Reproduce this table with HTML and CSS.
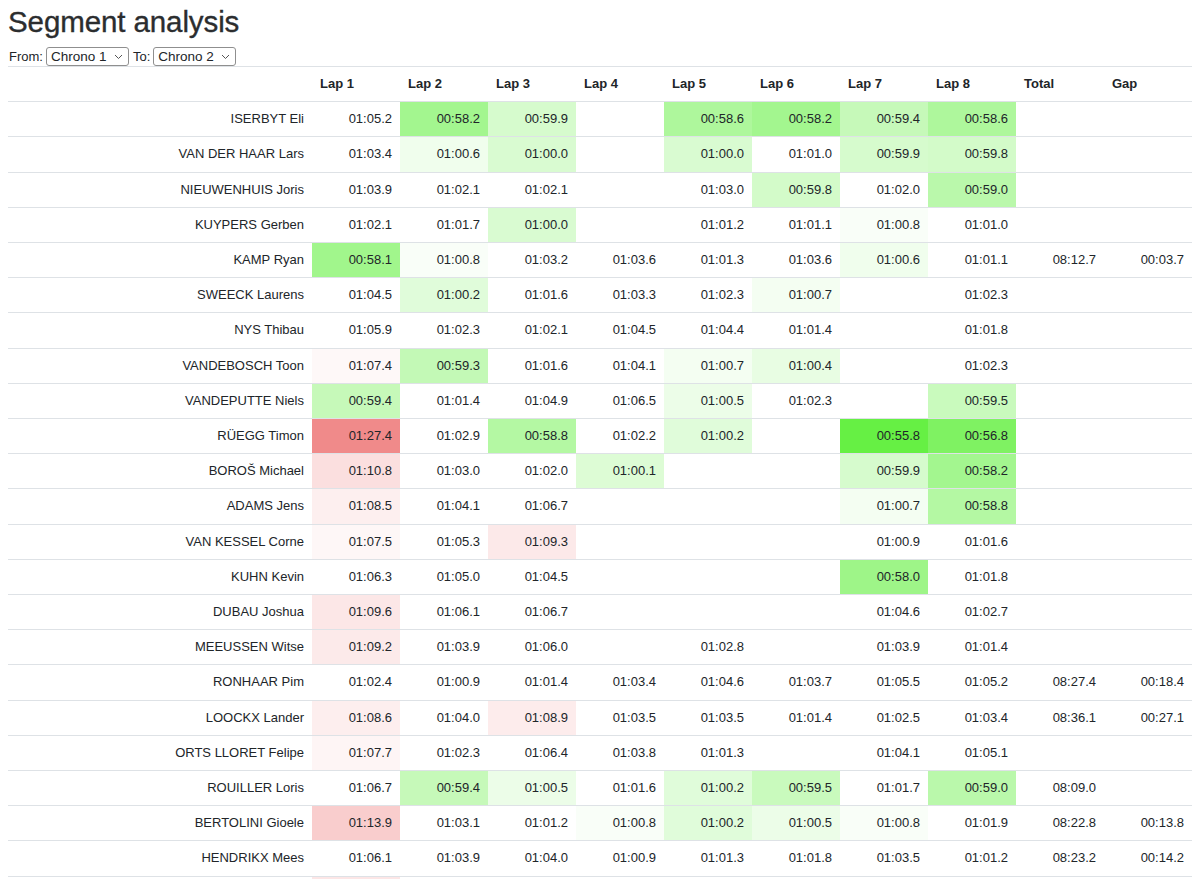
FILE: index.html
```html
<!DOCTYPE html>
<html lang="en">
<head>
<meta charset="utf-8">
<title>Segment analysis</title>
<link rel="stylesheet" href="styles.css">
</head>
<body>
<h1 class="title">Segment analysis</h1>
<div class="controls">
  <label class="ctl-label">From:</label>
  <span class="select-wrap">
    <select class="chrono-select"><option>Chrono 1</option><option>Chrono 2</option></select>
    <svg class="chev" width="9" height="6" viewBox="0 0 9 6"><polyline points="1,1 4.5,4.5 8,1" fill="none" stroke="#555" stroke-width="1"/></svg>
  </span>
  <label class="ctl-label">To:</label>
  <span class="select-wrap">
    <select class="chrono-select"><option>Chrono 2</option><option>Chrono 1</option></select>
    <svg class="chev" width="9" height="6" viewBox="0 0 9 6"><polyline points="1,1 4.5,4.5 8,1" fill="none" stroke="#555" stroke-width="1"/></svg>
  </span>
</div>
<table class="seg-table">
  <colgroup>
    <col class="col-name">
    <col><col><col><col><col><col><col><col><col><col>
  </colgroup>
  <thead>
    <tr><th></th><th>Lap 1</th><th>Lap 2</th><th>Lap 3</th><th>Lap 4</th><th>Lap 5</th><th>Lap 6</th><th>Lap 7</th><th>Lap 8</th><th>Total</th><th>Gap</th></tr>
  </thead>
  <tbody>
    <tr><td>ISERBYT Eli</td><td class="t">01:05.2</td><td class="t">00:58.2</td><td class="t">00:59.9</td><td class="t"></td><td class="t">00:58.6</td><td class="t">00:58.2</td><td class="t">00:59.4</td><td class="t">00:58.6</td><td></td><td></td></tr>
    <tr><td>VAN DER HAAR Lars</td><td class="t">01:03.4</td><td class="t">01:00.6</td><td class="t">01:00.0</td><td class="t"></td><td class="t">01:00.0</td><td class="t">01:01.0</td><td class="t">00:59.9</td><td class="t">00:59.8</td><td></td><td></td></tr>
    <tr><td>NIEUWENHUIS Joris</td><td class="t">01:03.9</td><td class="t">01:02.1</td><td class="t">01:02.1</td><td class="t"></td><td class="t">01:03.0</td><td class="t">00:59.8</td><td class="t">01:02.0</td><td class="t">00:59.0</td><td></td><td></td></tr>
    <tr><td>KUYPERS Gerben</td><td class="t">01:02.1</td><td class="t">01:01.7</td><td class="t">01:00.0</td><td class="t"></td><td class="t">01:01.2</td><td class="t">01:01.1</td><td class="t">01:00.8</td><td class="t">01:01.0</td><td></td><td></td></tr>
    <tr><td>KAMP Ryan</td><td class="t">00:58.1</td><td class="t">01:00.8</td><td class="t">01:03.2</td><td class="t">01:03.6</td><td class="t">01:01.3</td><td class="t">01:03.6</td><td class="t">01:00.6</td><td class="t">01:01.1</td><td>08:12.7</td><td>00:03.7</td></tr>
    <tr><td>SWEECK Laurens</td><td class="t">01:04.5</td><td class="t">01:00.2</td><td class="t">01:01.6</td><td class="t">01:03.3</td><td class="t">01:02.3</td><td class="t">01:00.7</td><td class="t"></td><td class="t">01:02.3</td><td></td><td></td></tr>
    <tr><td>NYS Thibau</td><td class="t">01:05.9</td><td class="t">01:02.3</td><td class="t">01:02.1</td><td class="t">01:04.5</td><td class="t">01:04.4</td><td class="t">01:01.4</td><td class="t"></td><td class="t">01:01.8</td><td></td><td></td></tr>
    <tr><td>VANDEBOSCH Toon</td><td class="t">01:07.4</td><td class="t">00:59.3</td><td class="t">01:01.6</td><td class="t">01:04.1</td><td class="t">01:00.7</td><td class="t">01:00.4</td><td class="t"></td><td class="t">01:02.3</td><td></td><td></td></tr>
    <tr><td>VANDEPUTTE Niels</td><td class="t">00:59.4</td><td class="t">01:01.4</td><td class="t">01:04.9</td><td class="t">01:06.5</td><td class="t">01:00.5</td><td class="t">01:02.3</td><td class="t"></td><td class="t">00:59.5</td><td></td><td></td></tr>
    <tr><td>RÜEGG Timon</td><td class="t">01:27.4</td><td class="t">01:02.9</td><td class="t">00:58.8</td><td class="t">01:02.2</td><td class="t">01:00.2</td><td class="t"></td><td class="t">00:55.8</td><td class="t">00:56.8</td><td></td><td></td></tr>
    <tr><td>BOROŠ Michael</td><td class="t">01:10.8</td><td class="t">01:03.0</td><td class="t">01:02.0</td><td class="t">01:00.1</td><td class="t"></td><td class="t"></td><td class="t">00:59.9</td><td class="t">00:58.2</td><td></td><td></td></tr>
    <tr><td>ADAMS Jens</td><td class="t">01:08.5</td><td class="t">01:04.1</td><td class="t">01:06.7</td><td class="t"></td><td class="t"></td><td class="t"></td><td class="t">01:00.7</td><td class="t">00:58.8</td><td></td><td></td></tr>
    <tr><td>VAN KESSEL Corne</td><td class="t">01:07.5</td><td class="t">01:05.3</td><td class="t">01:09.3</td><td class="t"></td><td class="t"></td><td class="t"></td><td class="t">01:00.9</td><td class="t">01:01.6</td><td></td><td></td></tr>
    <tr><td>KUHN Kevin</td><td class="t">01:06.3</td><td class="t">01:05.0</td><td class="t">01:04.5</td><td class="t"></td><td class="t"></td><td class="t"></td><td class="t">00:58.0</td><td class="t">01:01.8</td><td></td><td></td></tr>
    <tr><td>DUBAU Joshua</td><td class="t">01:09.6</td><td class="t">01:06.1</td><td class="t">01:06.7</td><td class="t"></td><td class="t"></td><td class="t"></td><td class="t">01:04.6</td><td class="t">01:02.7</td><td></td><td></td></tr>
    <tr><td>MEEUSSEN Witse</td><td class="t">01:09.2</td><td class="t">01:03.9</td><td class="t">01:06.0</td><td class="t"></td><td class="t">01:02.8</td><td class="t"></td><td class="t">01:03.9</td><td class="t">01:01.4</td><td></td><td></td></tr>
    <tr><td>RONHAAR Pim</td><td class="t">01:02.4</td><td class="t">01:00.9</td><td class="t">01:01.4</td><td class="t">01:03.4</td><td class="t">01:04.6</td><td class="t">01:03.7</td><td class="t">01:05.5</td><td class="t">01:05.2</td><td>08:27.4</td><td>00:18.4</td></tr>
    <tr><td>LOOCKX Lander</td><td class="t">01:08.6</td><td class="t">01:04.0</td><td class="t">01:08.9</td><td class="t">01:03.5</td><td class="t">01:03.5</td><td class="t">01:01.4</td><td class="t">01:02.5</td><td class="t">01:03.4</td><td>08:36.1</td><td>00:27.1</td></tr>
    <tr><td>ORTS LLORET Felipe</td><td class="t">01:07.7</td><td class="t">01:02.3</td><td class="t">01:06.4</td><td class="t">01:03.8</td><td class="t">01:01.3</td><td class="t"></td><td class="t">01:04.1</td><td class="t">01:05.1</td><td></td><td></td></tr>
    <tr><td>ROUILLER Loris</td><td class="t">01:06.7</td><td class="t">00:59.4</td><td class="t">01:00.5</td><td class="t">01:01.6</td><td class="t">01:00.2</td><td class="t">00:59.5</td><td class="t">01:01.7</td><td class="t">00:59.0</td><td>08:09.0</td><td></td></tr>
    <tr><td>BERTOLINI Gioele</td><td class="t">01:13.9</td><td class="t">01:03.1</td><td class="t">01:01.2</td><td class="t">01:00.8</td><td class="t">01:00.2</td><td class="t">01:00.5</td><td class="t">01:00.8</td><td class="t">01:01.9</td><td>08:22.8</td><td>00:13.8</td></tr>
    <tr><td>HENDRIKX Mees</td><td class="t">01:06.1</td><td class="t">01:03.9</td><td class="t">01:04.0</td><td class="t">01:00.9</td><td class="t">01:01.3</td><td class="t">01:01.8</td><td class="t">01:03.5</td><td class="t">01:01.2</td><td>08:23.2</td><td>00:14.2</td></tr>
    <tr><td>VANTHOURENHOUT Michael</td><td class="t">01:09.8</td><td class="t">01:03.6</td><td class="t">01:03.2</td><td class="t">01:02.4</td><td class="t">01:02.0</td><td class="t">01:01.9</td><td class="t">01:02.6</td><td class="t">01:02.1</td><td>08:27.6</td><td>00:18.6</td></tr>
  </tbody>
</table>
<script src="script.js"></script>
</body>
</html>
```

FILE: styles.css
```css
body {
  margin: 5px 8px 0;
  font-family: "Liberation Sans", Arial, Helvetica, sans-serif;
  font-size: 13px;
  color: #212529;
  background: #fff;
}

.title {
  margin: 0;
  font-size: 29.5px;
  line-height: 34px;
  font-weight: normal;
  color: #2b2d2f;
  letter-spacing: -0.1px;
  -webkit-text-stroke: 0.35px #2b2d2f;
}

.controls {
  margin-top: 7px;
  height: 20px;
  display: flex;
  align-items: center;
  gap: 3px;
  font-size: 13px;
}

.ctl-label {
  margin-left: 1px;
}

.select-wrap {
  position: relative;
  display: inline-block;
  height: 19px;
}

.chrono-select {
  -webkit-appearance: none;
  appearance: none;
  width: 83px;
  height: 19px;
  margin: 0;
  padding: 0 16px 0 4px;
  border: 1px solid #8f8f8f;
  border-radius: 3px;
  background: #fff;
  color: #212529;
  font-family: "Liberation Sans", Arial, Helvetica, sans-serif;
  font-size: 13.5px;
  line-height: 17px;
}

.chev {
  position: absolute;
  right: 6px;
  top: 7px;
  pointer-events: none;
}

.seg-table {
  width: 100%;
  border-collapse: collapse;
  table-layout: fixed;
}

.col-name {
  width: 304px;
}

.seg-table th,
.seg-table td {
  padding: 8px;
  line-height: 18.2px;
  border-top: 1px solid #dee2e6;
  white-space: nowrap;
  overflow: hidden;
}

.seg-table th {
  text-align: left;
  font-weight: bold;
  border-bottom: 1px solid #dee2e6;
}

.seg-table td {
  text-align: right;
}
```

FILE: script.js
```js
(function () {
  function mix(rgb, k) {
    var r = Math.round(255 + (rgb[0] - 255) * k);
    var g = Math.round(255 + (rgb[1] - 255) * k);
    var b = Math.round(255 + (rgb[2] - 255) * k);
    return 'rgb(' + r + ',' + g + ',' + b + ')';
  }
  var cells = document.querySelectorAll('td.t');
  for (var i = 0; i < cells.length; i++) {
    var td = cells[i];
    var m = td.textContent.trim().match(/^(\d+):(\d+(?:\.\d+)?)$/);
    if (!m) continue;
    var t = parseInt(m[1], 10) * 60 + parseFloat(m[2]);
    var c = null;
    if (t < 60.88) {
      var k = Math.min(1, Math.pow((60.88 - t) / 5.08, 0.8));
      c = mix([102, 240, 68], k);
    } else if (t > 66.8) {
      var k2 = Math.min(1, Math.pow((t - 66.8) / 20.6, 0.8));
      c = mix([240, 138, 138], k2);
    }
    if (c) td.style.backgroundColor = c;
  }
})();
```
